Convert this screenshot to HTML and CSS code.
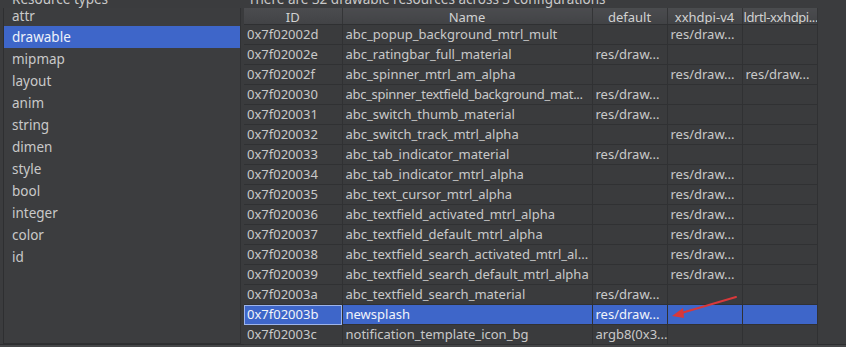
FILE: index.html
```html
<!DOCTYPE html>
<html lang="en">
<head>
    <meta charset="UTF-8">
    <title>Resources</title>
    <link rel="stylesheet" href="styles.css">
</head>
<body>

    <!-- top labels (cut off by window) -->
    <div class="topbar">
        <div class="top-left"><span>Resource types</span></div>
        <div class="top-right"><span>There are 32 drawable resources across 3 configurations</span></div>
    </div>

    <div class="main">
        <!-- resource type list -->
        <ul class="types">
            <li>attr</li>
            <li class="selected">drawable</li>
            <li>mipmap</li>
            <li>layout</li>
            <li>anim</li>
            <li>string</li>
            <li>dimen</li>
            <li>style</li>
            <li>bool</li>
            <li>integer</li>
            <li>color</li>
            <li>id</li>
        </ul>

        <div class="splitter"></div>

        <!-- resource table -->
        <div class="tablewrap">
            <table class="res">
                <colgroup>
                    <col class="c-id">
                    <col class="c-name">
                    <col class="c-def">
                    <col class="c-xx">
                    <col class="c-ld">
                </colgroup>
                <thead>
                    <tr>
                        <th>ID</th>
                        <th>Name</th>
                        <th>default</th>
                        <th>xxhdpi-v4</th>
                        <th class="tight">ldrtl-xxhdpi...</th>
                    </tr>
                </thead>
                <tbody>
                    <tr><td>0x7f02002d</td><td>abc_popup_background_mtrl_mult</td><td></td><td>res/draw...</td><td></td></tr>
                    <tr><td>0x7f02002e</td><td>abc_ratingbar_full_material</td><td>res/draw...</td><td></td><td></td></tr>
                    <tr><td>0x7f02002f</td><td>abc_spinner_mtrl_am_alpha</td><td></td><td>res/draw...</td><td>res/draw...</td></tr>
                    <tr><td>0x7f020030</td><td class="long">abc_spinner_textfield_background_mat...</td><td>res/draw...</td><td></td><td></td></tr>
                    <tr><td>0x7f020031</td><td>abc_switch_thumb_material</td><td>res/draw...</td><td></td><td></td></tr>
                    <tr><td>0x7f020032</td><td>abc_switch_track_mtrl_alpha</td><td></td><td>res/draw...</td><td></td></tr>
                    <tr><td>0x7f020033</td><td>abc_tab_indicator_material</td><td>res/draw...</td><td></td><td></td></tr>
                    <tr><td>0x7f020034</td><td>abc_tab_indicator_mtrl_alpha</td><td></td><td>res/draw...</td><td></td></tr>
                    <tr><td>0x7f020035</td><td>abc_text_cursor_mtrl_alpha</td><td></td><td>res/draw...</td><td></td></tr>
                    <tr><td>0x7f020036</td><td>abc_textfield_activated_mtrl_alpha</td><td></td><td>res/draw...</td><td></td></tr>
                    <tr><td>0x7f020037</td><td>abc_textfield_default_mtrl_alpha</td><td></td><td>res/draw...</td><td></td></tr>
                    <tr><td>0x7f020038</td><td>abc_textfield_search_activated_mtrl_al...</td><td></td><td>res/draw...</td><td></td></tr>
                    <tr><td>0x7f020039</td><td>abc_textfield_search_default_mtrl_alpha</td><td></td><td>res/draw...</td><td></td></tr>
                    <tr><td>0x7f02003a</td><td>abc_textfield_search_material</td><td>res/draw...</td><td></td><td></td></tr>
                    <tr class="selected"><td class="focus">0x7f02003b</td><td>newsplash</td><td>res/draw...</td><td></td><td></td></tr>
                    <tr><td>0x7f02003c</td><td>notification_template_icon_bg</td><td>argb8(0x3...</td><td></td><td></td></tr>
                </tbody>
            </table>

            <!-- red annotation arrow -->
            <svg class="arrow" width="80" height="30" viewBox="0 0 80 30">
                <line x1="68" y1="2" x2="10" y2="19" stroke="#d9383a" stroke-width="2" stroke-linecap="round"/>
                <polygon points="4,21 15,13 16,23" fill="#d9383a"/>
            </svg>
        </div>
    </div>

    <div class="bottombar"></div>

</body>
</html>
```

FILE: styles.css
```css
body {
    margin: 0;
    width: 846px;
    height: 347px;
    overflow: hidden;
    background-color: #3b3c3e;
    font-family: "Noto Sans", "DejaVu Sans", sans-serif;
    font-size: 13.5px;
    color: #c9c9c9;
}

.topbar {
    display: flex;
    height: 8px;
    overflow: hidden;
}

.topbar span {
    display: block;
    margin-top: -10px;
    line-height: 18px;
    white-space: nowrap;
}

.top-left {
    width: 246px;
    padding-left: 12px;
    box-sizing: border-box;
}

.top-right {
    padding-left: 2px;
}

.main {
    display: flex;
    height: 336px;
}

.types {
    list-style: none;
    margin: 0 0 0 3px;
    padding: 0;
    width: 237px;
    border-left: 1px solid #2e2f31;
    border-bottom: 1px solid #2e2f31;
    background-color: #3c3d3f;
    box-sizing: border-box;
}

.types li {
    height: 22px;
    line-height: 22px;
    padding-left: 8px;
}

.types li:first-child {
    height: 18px;
    line-height: 16px;
}

.types li.selected {
    background-color: #3e66c9;
    color: #eef2fb;
}

.splitter {
    width: 3px;
    border-left: 1px solid #303133;
    background-color: #3a3b3d;
}

.tablewrap {
    position: relative;
    flex: 1;
}

.res {
    border-collapse: collapse;
    table-layout: fixed;
    width: 573px;
    background-color: #3a3b3d;
}

.c-id { width: 98px; }
.c-name { width: 250px; }
.c-def { width: 75px; }
.c-xx { width: 75px; }
.c-ld { width: 75px; }

.res th {
    height: 15px;
    padding: 1px 0 0 0;
    font-weight: normal;
    font-size: 13px;
    text-align: center;
    white-space: nowrap;
    overflow: hidden;
    background: linear-gradient(#4b4c4f, #424346);
    border-right: 1px solid #343537;
    border-bottom: 1px solid #2f3032;
    color: #d2d2d2;
    line-height: 14px;
}

.res th.tight {
    letter-spacing: -0.4px;
    text-align: left;
    padding-left: 1px;
}

.res td {
    height: 19px;
    padding: 0 0 0 3px;
    font-size: 13px;
    white-space: nowrap;
    overflow: hidden;
    border-right: 1px solid #303133;
    border-bottom: 1px solid #303133;
    line-height: 19px;
}

.res td.long {
    letter-spacing: -0.3px;
}

.res tr.selected td {
    background-color: #3e66c9;
    color: #f1f4fb;
}

.res td.focus {
    outline: 1px solid #9db4ea;
    outline-offset: -1px;
}

.arrow {
    position: absolute;
    left: 424px;
    top: 287px;
}

.bottombar {
    height: 2px;
    background-color: #454648;
    border-top: 1px solid #2c2d2f;
}
```
